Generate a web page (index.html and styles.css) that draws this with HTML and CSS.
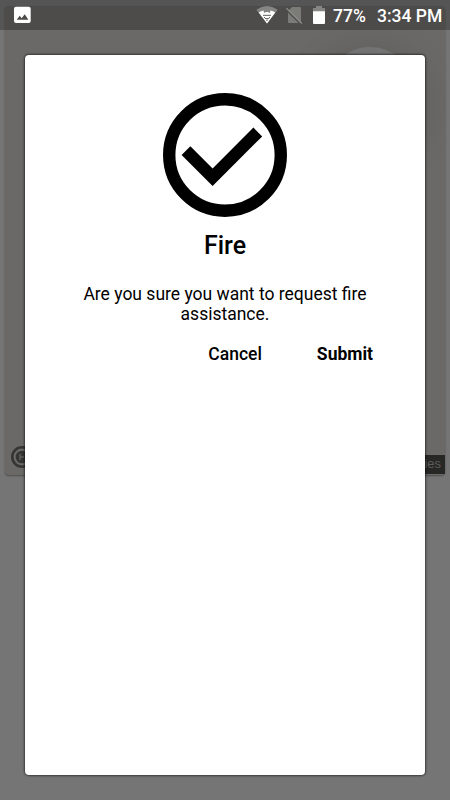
FILE: index.html
```html
<!DOCTYPE html>
<html lang="en">
<head>
<meta charset="utf-8">
<title>Fire</title>
<link rel="stylesheet" href="styles.css">
</head>
<body>
<div class="backdrop">
  <div class="panel">
    <div class="bubble"></div>
    <svg class="mark" width="24" height="24" viewBox="0 0 24 24"><circle cx="12" cy="12" r="9.7" fill="none" stroke="#353533" stroke-width="2.6"/><circle cx="12" cy="12" r="6.3" fill="#353533"/><path d="M10 9v6M10 12H14" stroke="#5d5d5a" stroke-width="1.6"/></svg>
    <span class="tag">ies</span>
  </div>
</div>
<div class="screen">
  <header class="status">
    <svg class="photo" width="18" height="18" viewBox="0 0 18 18"><rect x="1" y=".7" width="16.7" height="16.3" rx="2" fill="#fff"/><path d="M3.7 13.8l3-4 2 2.4 3-4 3.7 5.6z" fill="#4c4b48"/></svg>
    <svg class="wifi" width="22" height="18" viewBox="0 0 22 18"><path d="M.3 3.7Q11-3.7 21.7 3.7L11 17.5z" fill="#858583"/><path d="M2.7 6.6Q5 5.1 7.6 4.6L8 7Q11 4.8 14 7L14.4 4.6Q17 5.1 19.3 6.6L11 17.5z" fill="#fff"/><path d="M7 9.3h8M8.2 11l1.2 1.6h3.2l1.2-1.6M10.2 14.2h1.6" fill="none" stroke="#4c4b48" stroke-width=".9"/></svg>
    <svg class="sim" width="17" height="19" viewBox="0 0 17 19"><path d="M6 1h8q1 0 1 1v15H3q-1 0-1-1V5z" fill="#7b7b78"/><path d="M.4 3.8L15.4 18.4" stroke="#4c4b48" stroke-width="2"/><path d="M.4 2.2L15.8 17.6" stroke="#8b8b88" stroke-width="1.4"/></svg>
    <svg class="battery" width="12" height="19" viewBox="0 0 12 19"><path d="M3 0h6v2h3v5H0V2h3z" fill="#858583"/><path d="M0 5.3h12V17q0 1-1 1H1q-1 0-1-1z" fill="#fff"/></svg>
    <span class="percent">77%</span>
    <span class="clock">3:34 PM</span>
  </header>
  <main class="dialog">
    <svg class="check" width="150" height="150" viewBox="-.1 -.1 24.2 24.2"><circle cx="12" cy="12" r="9" fill="none" stroke="#000" stroke-width="2"/><path d="M16.59 7.58L10 14.17l-3.59-3.58L5 12l5 5 8-8z"/></svg>
    <h1>Fire</h1>
    <p>Are you sure you want to request fire assistance.</p>
    <div class="actions">
      <button class="cancel">Cancel</button>
      <button class="submit">Submit</button>
    </div>
  </main>
</div>
</body>
</html>
```

FILE: styles.css
```css
* { box-sizing: border-box; }
body {
  margin: 0;
  height: 800px;
  overflow: hidden;
  background: #757575;
  color: #000;
  font-family: Roboto, sans-serif;
}
.backdrop {
  position: absolute;
  inset: 0;
  padding: 6px 5px;
}
.panel {
  position: relative;
  height: 469px;
  border-radius: 4px;
  background: #6a6967;
  box-shadow: 0 1px 2px rgba(0, 0, 0, .35);
  overflow: clip;
  overflow-clip-margin: 3px;
}
.bubble {
  position: absolute;
  left: 320px;
  top: 41px;
  width: 90px;
  height: 90px;
  border-radius: 50%;
  background: #737373;
  box-shadow: 0 12px 40px 6px rgba(0, 0, 0, .15);
}
.mark {
  position: absolute;
  left: 5px;
  top: 439px;
}
.tag {
  position: absolute;
  right: 0;
  top: 449px;
  width: 40px;
  height: 19px;
  padding-right: 4px;
  background: #272726;
  color: #5c5c5c;
  font: 13px/18px "Liberation Sans", sans-serif;
  text-align: right;
}
.screen { position: relative; }
.status {
  display: flex;
  align-items: flex-start;
  height: 30px;
  padding: 6px 0 0 13px;
  background: rgba(0, 0, 0, .27);
  color: #fff;
  font-size: 17.5px;
  font-weight: 500;
  line-height: 20px;
  white-space: nowrap;
}
.wifi { margin-left: 225px; }
.sim { margin-left: 8px; }
.battery { margin-left: 10px; }
.percent { margin-left: 8px; width: 44px; }
.clock { flex: 1; }
.dialog {
  display: flex;
  flex-direction: column;
  align-items: center;
  width: 400px;
  height: 720px;
  margin: 25px auto 0;
  padding-top: 25px;
  background: #fff;
  border-radius: 4px;
  box-shadow: 0 0 2px 1px rgba(0, 0, 0, .5);
}
h1 {
  margin: 2px 0 0;
  font-size: 25px;
  font-weight: 500;
  line-height: 28px;
}
p {
  width: 310px;
  margin: 24px 0 0;
  font-size: 17.5px;
  line-height: 20px;
  text-align: center;
}
.actions {
  display: flex;
  align-self: stretch;
  justify-content: flex-end;
  gap: 55px;
  margin-top: 20px;
  padding-right: 52px;
}
button {
  padding: 0;
  border: 0;
  background: none;
  color: #000;
  font: 500 17.5px/20px Roboto, sans-serif;
}
.submit { font-weight: 700; }
```
